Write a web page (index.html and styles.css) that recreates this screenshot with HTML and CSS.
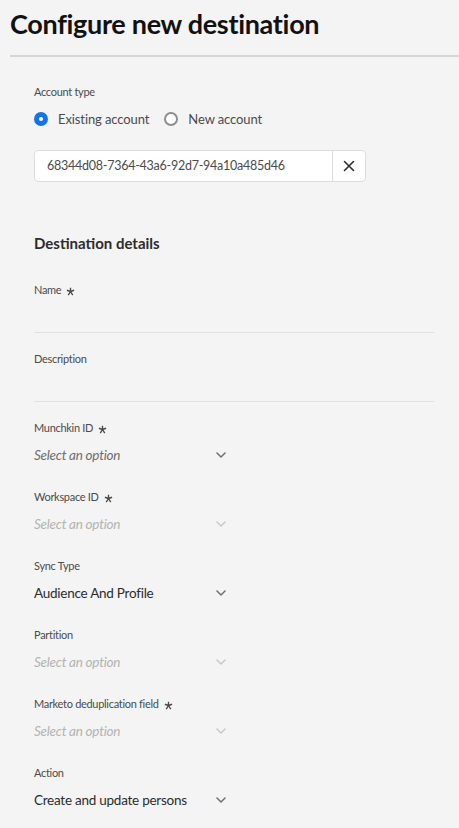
FILE: index.html
```html
<!DOCTYPE html>
<html lang="en">
<head>
<meta charset="utf-8">
<title>Configure new destination</title>
<link rel="stylesheet" href="styles.css">
</head>
<body>
<header class="page-header">
  <h1 class="page-title">Configure new destination</h1>
</header>
<main class="form">
  <section class="account">
    <div class="label">Account type</div>
    <div class="radio-group">
      <label class="radio"><span class="radio-dot checked"></span><span class="radio-text">Existing account</span></label>
      <label class="radio"><span class="radio-dot"></span><span class="radio-text">New account</span></label>
    </div>
    <div class="combo">
      <div class="combo-value">68344d08-7364-43a6-92d7-94a10a485d46</div>
      <button class="combo-clear" type="button" aria-label="Clear">
        <svg width="12" height="12" viewBox="0 0 12 12"><path d="M1.5 1.5 L10.5 10.5 M10.5 1.5 L1.5 10.5" stroke="#2c2c2c" stroke-width="1.6" stroke-linecap="round" fill="none"/></svg>
      </button>
    </div>
  </section>

  <h2 class="section-title">Destination details</h2>

  <div class="fields">
    <div class="field">
      <div class="label">Name <svg class="req" viewBox="0 0 10 10"><path d="M5 0.8 V5 M5 5 L1 3.6 M5 5 L9 3.6 M5 5 L2.5 9 M5 5 L7.5 9" stroke="#4b4b4b" stroke-width="1.5" fill="none"/></svg></div>
      <div class="text-input"></div>
    </div>
    <div class="field">
      <div class="label">Description</div>
      <div class="text-input"></div>
    </div>
    <div class="field">
      <div class="label">Munchkin ID <svg class="req" viewBox="0 0 10 10"><path d="M5 0.8 V5 M5 5 L1 3.6 M5 5 L9 3.6 M5 5 L2.5 9 M5 5 L7.5 9" stroke="#4b4b4b" stroke-width="1.5" fill="none"/></svg></div>
      <div class="picker"><span class="picker-text placeholder">Select an option</span><svg class="chevron" viewBox="0 0 10 6"><path d="M1 1 L5 5 L9 1" fill="none" stroke-width="1.5" stroke-linecap="round" stroke-linejoin="round"/></svg></div>
    </div>
    <div class="field">
      <div class="label">Workspace ID <svg class="req" viewBox="0 0 10 10"><path d="M5 0.8 V5 M5 5 L1 3.6 M5 5 L9 3.6 M5 5 L2.5 9 M5 5 L7.5 9" stroke="#4b4b4b" stroke-width="1.5" fill="none"/></svg></div>
      <div class="picker disabled"><span class="picker-text placeholder">Select an option</span><svg class="chevron" viewBox="0 0 10 6"><path d="M1 1 L5 5 L9 1" fill="none" stroke-width="1.5" stroke-linecap="round" stroke-linejoin="round"/></svg></div>
    </div>
    <div class="field">
      <div class="label">Sync Type</div>
      <div class="picker"><span class="picker-text">Audience And Profile</span><svg class="chevron" viewBox="0 0 10 6"><path d="M1 1 L5 5 L9 1" fill="none" stroke-width="1.5" stroke-linecap="round" stroke-linejoin="round"/></svg></div>
    </div>
    <div class="field">
      <div class="label">Partition</div>
      <div class="picker disabled"><span class="picker-text placeholder">Select an option</span><svg class="chevron" viewBox="0 0 10 6"><path d="M1 1 L5 5 L9 1" fill="none" stroke-width="1.5" stroke-linecap="round" stroke-linejoin="round"/></svg></div>
    </div>
    <div class="field">
      <div class="label">Marketo deduplication field <svg class="req" viewBox="0 0 10 10"><path d="M5 0.8 V5 M5 5 L1 3.6 M5 5 L9 3.6 M5 5 L2.5 9 M5 5 L7.5 9" stroke="#4b4b4b" stroke-width="1.5" fill="none"/></svg></div>
      <div class="picker disabled"><span class="picker-text placeholder">Select an option</span><svg class="chevron" viewBox="0 0 10 6"><path d="M1 1 L5 5 L9 1" fill="none" stroke-width="1.5" stroke-linecap="round" stroke-linejoin="round"/></svg></div>
    </div>
    <div class="field">
      <div class="label">Action</div>
      <div class="picker"><span class="picker-text">Create and update persons</span><svg class="chevron" viewBox="0 0 10 6"><path d="M1 1 L5 5 L9 1" fill="none" stroke-width="1.5" stroke-linecap="round" stroke-linejoin="round"/></svg></div>
    </div>
  </div>
</main>
</body>
</html>
```

FILE: styles.css
```css
* { box-sizing: border-box; }

html, body {
  margin: 0;
  padding: 0;
  background: #f4f4f4;
}

body {
  font-family: Lato, "Open Sans", sans-serif;
  color: #2c2c2c;
  height: 828px;
  overflow: hidden;
}

.page-header {
  margin-left: 10px;
  padding-top: 6px;
  padding-bottom: 13px;
  border-bottom: 2px solid #d5d5d5;
}

.page-title {
  margin: 0;
  font-size: 27px;
  line-height: 36px;
  font-weight: 700;
  color: #111;
  letter-spacing: -0.3px;
}

.form {
  padding: 27px 0 0 34px;
}

.label {
  display: flex;
  align-items: center;
  gap: 5px;
  height: 16px;
  font-size: 11px;
  line-height: 16px;
  letter-spacing: -0.3px;
  color: #4b4b4b;
}

.req {
  width: 9px;
  height: 9px;
  margin-top: 3px;
}

.radio-group {
  display: flex;
  align-items: center;
  gap: 15px;
  height: 24px;
  margin-top: 7px;
}

.radio {
  display: flex;
  align-items: center;
  gap: 10px;
}

.radio-dot {
  width: 14px;
  height: 14px;
  border-radius: 50%;
  border: 2px solid #8e8e8e;
  background: #fff;
}

.radio-dot.checked {
  border: 5px solid #1473e6;
}

.radio-text {
  font-size: 13px;
  letter-spacing: -0.1px;
  color: #4b4b4b;
}

.combo {
  display: flex;
  width: 332px;
  height: 32px;
  margin-top: 19px;
  border: 1px solid #dcdcdc;
  border-radius: 4px;
  background: #fff;
}

.combo-value {
  flex: 1;
  padding-left: 12px;
  font-size: 12.5px;
  letter-spacing: -0.25px;
  line-height: 30px;
  color: #4b4b4b;
  border-right: 1px solid #dcdcdc;
}

.combo-clear {
  width: 32px;
  display: flex;
  align-items: center;
  justify-content: center;
  border: 0;
  padding: 0;
  background: transparent;
}

.section-title {
  margin: 51px 0 0;
  font-size: 15px;
  line-height: 20px;
  font-weight: 700;
  color: #2c2c2c;
}

.fields {
  display: flex;
  flex-direction: column;
  gap: 18px;
  margin-top: 29px;
}

.text-input {
  width: 400px;
  height: 35px;
  border-bottom: 1px solid #e1e1e1;
}

.picker {
  display: flex;
  align-items: center;
  justify-content: space-between;
  width: 192px;
  height: 32px;
  margin-top: 3px;
}

.picker-text {
  font-size: 13.5px;
  letter-spacing: -0.25px;
  color: #2c2c2c;
}

.picker-text.placeholder {
  font-style: italic;
  color: #6e6e6e;
}

.chevron {
  width: 10px;
  height: 6px;
  stroke: #6e6e6e;
}

.picker.disabled .picker-text {
  color: #b3b3b3;
}

.picker.disabled .chevron {
  stroke: #c8c8c8;
}
```
